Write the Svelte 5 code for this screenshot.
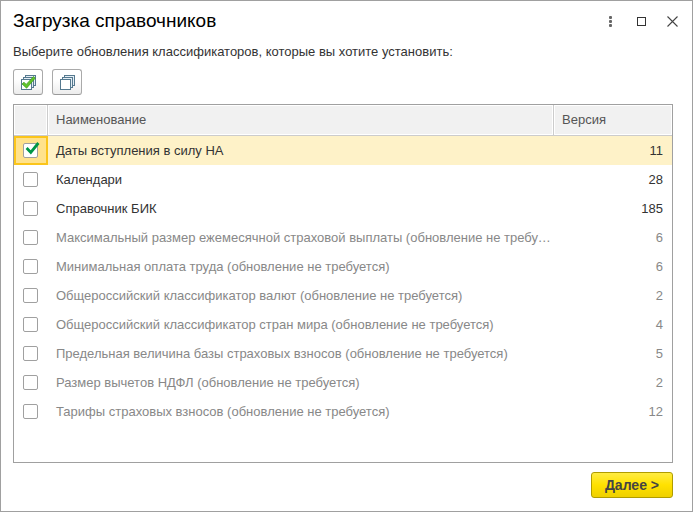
<script lang="ts">
  let rows = $state([
    { name: 'Даты вступления в силу НА', version: 11, checked: true, actual: false },
    { name: 'Календари', version: 28, checked: false, actual: false },
    { name: 'Справочник БИК', version: 185, checked: false, actual: false },
    { name: 'Максимальный размер ежемесячной страховой выплаты', version: 6, checked: false, actual: true },
    { name: 'Минимальная оплата труда', version: 6, checked: false, actual: true },
    { name: 'Общероссийский классификатор валют', version: 2, checked: false, actual: true },
    { name: 'Общероссийский классификатор стран мира', version: 4, checked: false, actual: true },
    { name: 'Предельная величина базы страховых взносов', version: 5, checked: false, actual: true },
    { name: 'Размер вычетов НДФЛ', version: 2, checked: false, actual: true },
    { name: 'Тарифы страховых взносов', version: 12, checked: false, actual: true }
  ]);

  let selected = $state(0);

  function setAll(value: boolean) {
    for (const row of rows) row.checked = value;
  }
</script>

{#snippet stack()}
  <g fill="#e4eef5" stroke="#55798f">
    <rect x="4.5" y="0.5" width="10" height="10" />
    <rect x="2.5" y="2.5" width="10" height="10" />
    <rect x="0.5" y="4.5" width="10" height="10" fill="#fff" />
  </g>
{/snippet}

<div class="window">
  <header>
    <h1>Загрузка справочников</h1>
    <div class="window-buttons">
      <button type="button" aria-label="Ещё">
        <svg width="11" height="11" viewBox="0 0 11 11" fill="#666">
          <rect x="4" y="0" width="3" height="3" rx="1" />
          <rect x="4" y="4" width="3" height="3" rx="1" />
          <rect x="4" y="8" width="3" height="3" rx="1" />
        </svg>
      </button>
      <button type="button" aria-label="Развернуть">
        <svg width="11" height="11" viewBox="0 0 11 11">
          <rect x="1.5" y="1.5" width="8" height="8" fill="none" stroke="#333" />
        </svg>
      </button>
      <button type="button" aria-label="Закрыть">
        <svg width="11" height="11" viewBox="0 0 11 11">
          <path d="M.5 .5l10 10M10.5 .5l-10 10" stroke="#444" stroke-width="1.1" />
        </svg>
      </button>
    </div>
  </header>

  <main>
    <p>Выберите обновления классификаторов, которые вы хотите установить:</p>

    <div class="toolbar">
      <button type="button" aria-label="Установить флажки" onclick={() => setAll(true)}>
        <svg width="15" height="15" viewBox="0 0 15 15">
          {@render stack()}
          <path d="M1 9l2-1.8 2.2 2.2L12.6 1.4 14.2 3.2 5.6 13.2z" fill="#62c42a" stroke="#3a951c" stroke-width=".7" />
        </svg>
      </button>
      <button type="button" aria-label="Снять флажки" onclick={() => setAll(false)}>
        <svg width="15" height="15" viewBox="0 0 15 15">
          {@render stack()}
        </svg>
      </button>
    </div>

    <div class="list">
      <table>
        <thead>
          <tr>
            <th class="mark"></th>
            <th>Наименование</th>
            <th class="version">Версия</th>
          </tr>
        </thead>
        <tbody>
          {#each rows as row, i}
            <tr class:selected={selected === i} class:actual={row.actual} onclick={() => (selected = i)}>
              <td class="mark">
                <input id="row-{i}" type="checkbox" bind:checked={row.checked} />
                {#if row.checked}
                  <svg class="tick" width="15" height="13" viewBox="0 0 15 13">
                    <path d="M1.6 6l4.2 4.4L13.4 1" fill="none" stroke="#009646" stroke-width="2.8" />
                  </svg>
                {/if}
              </td>
              <td><label for="row-{i}">{row.name}{row.actual ? ' (обновление не требуется)' : ''}</label></td>
              <td class="version">{row.version}</td>
            </tr>
          {/each}
        </tbody>
      </table>
    </div>

    <footer>
      <button type="button" class="next">Далее &gt;</button>
    </footer>
  </main>
</div>

<style>
  :global(body) {
    margin: 0;
    background: #fff;
  }

  .window {
    box-sizing: border-box;
    min-height: 100vh;
    display: flex;
    flex-direction: column;
    border: 1px solid #a0a0a0;
    background: #fff;
    color: #333;
    font-family: Arial, 'Liberation Sans', sans-serif;
    font-size: 13px;
    line-height: 16px;
  }

  button {
    font-family: inherit;
    box-sizing: border-box;
    padding: 0;
    cursor: pointer;
  }

  svg {
    display: block;
  }

  header {
    display: flex;
    align-items: center;
    justify-content: space-between;
    height: 40px;
    padding: 0 4px 0 12px;
  }

  h1 {
    margin: 0;
    font-size: 19px;
    font-weight: normal;
    line-height: 24px;
    color: #000;
  }

  .window-buttons {
    display: flex;
  }

  .window-buttons button {
    display: flex;
    align-items: center;
    justify-content: center;
    width: 31px;
    height: 31px;
    border: 0;
    background: none;
  }

  main {
    flex: 1;
    display: flex;
    flex-direction: column;
    padding: 3px 19px 13px 12px;
  }

  p {
    margin: 0 0 9px;
  }

  .toolbar {
    display: flex;
    gap: 9px;
    margin-bottom: 9px;
  }

  .toolbar button {
    display: flex;
    align-items: center;
    justify-content: center;
    width: 30px;
    height: 26px;
    border: 1px solid #aaa;
    border-bottom-color: #999;
    border-radius: 3px;
    background: linear-gradient(#fff 40%, #ececec);
  }

  .list {
    flex: 1;
    border: 1px solid #a0a0a0;
  }

  table {
    width: 100%;
    table-layout: fixed;
    border-collapse: separate;
    border-spacing: 0;
  }

  th {
    height: 31px;
    padding: 0 8px;
    border-right: 1px solid #ccc;
    border-bottom: 1px solid #ccc;
    background: #f1f1f1;
    box-shadow: inset 0 0 0 1px #fff;
    color: #555;
    font-weight: normal;
    text-align: left;
  }

  th:last-child {
    border-right: 0;
  }

  th,
  td {
    box-sizing: border-box;
  }

  td {
    height: 29px;
    padding: 0 2px 0 8px;
    overflow: hidden;
    white-space: nowrap;
    text-overflow: ellipsis;
  }

  .mark {
    position: relative;
    width: 34px;
    padding: 0 9px;
  }

  .version {
    width: 118px;
  }

  td.version {
    padding-right: 9px;
    text-align: right;
  }

  .actual {
    color: #888;
  }

  .selected td {
    background: #fef2c8;
  }

  .selected .mark {
    background: #ffe28c;
    box-shadow: inset 0 0 0 2px #fbc51b;
  }

  input {
    appearance: none;
    display: block;
    box-sizing: border-box;
    width: 15px;
    height: 15px;
    margin: 0;
    border: 1px solid #a0a0a0;
    border-radius: 2px;
    background: #fff;
  }

  .tick {
    position: absolute;
    left: 11px;
    top: 6px;
    pointer-events: none;
  }

  footer {
    display: flex;
    justify-content: flex-end;
    margin-top: 9px;
  }

  .next {
    height: 26px;
    padding: 0 13px;
    border: 1px solid #b09c00;
    border-radius: 3px;
    background: linear-gradient(#ffec42, #ffe100 50%, #efd000);
    color: #444;
    font-size: 14px;
    font-weight: bold;
  }
</style>
